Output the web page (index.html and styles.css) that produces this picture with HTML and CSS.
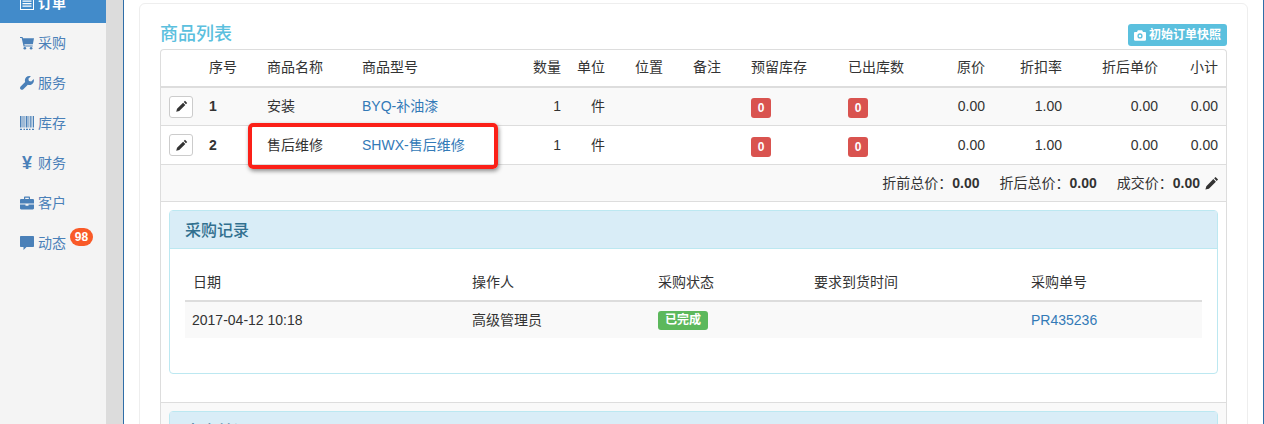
FILE: index.html
```html
<!DOCTYPE html>
<html lang="zh-CN">
<head>
  <meta charset="UTF-8">
  <title>订单详情</title>
  <link rel="stylesheet" href="styles.css">
</head>
<body>
  <aside class="sidebar">
    <a class="nav-item active" href="#">
      <svg class="nav-icon" viewBox="0 0 14 14"><path fill="currentColor" fill-rule="evenodd" d="M0 0h14v14H0zM1 3v10h12V3zM2.500 4.500h9v1.300h-9zM2.500 7h9v1.300h-9zM2.500 9.500h9v1.300h-9z"/></svg>
      <span>订单</span>
    </a>
    <a class="nav-item" href="#">
      <svg class="nav-icon" viewBox="0 0 16 16"><path fill="currentColor" d="M0 1h2.900l.5 1.700H16l-1.300 6.800H5l.3 1.300h9.200V12H4.100L1.900 2.200H0z"/><circle fill="currentColor" cx="5.500" cy="14" r="1.500"/><circle fill="currentColor" cx="12.700" cy="14" r="1.500"/></svg>
      <span>采购</span>
    </a>
    <a class="nav-item" href="#">
      <svg class="nav-icon" viewBox="0 0 16 16"><path fill="currentColor" d="M15.700 3.500l-2.900 2.800-2.600-.6-.6-2.500L12.400.4C10.500-.3 8.400.1 7 1.500 5.600 2.900 5.200 5 5.900 6.800L.7 12c-.9.900-.9 2.300 0 3.100s2.200.9 3.100 0L9 9.900c1.800.7 3.900.3 5.300-1.100 1.500-1.400 1.900-3.500 1.400-5.300z"/></svg>
      <span>服务</span>
    </a>
    <a class="nav-item" href="#">
      <svg class="nav-icon" viewBox="0 0 14 14"><path fill="currentColor" d="M0 0h1.500v11.500H0zM2.500 0h1v11.500h-1zM4.500 0h.8v11.500h-.8zM6 0h1.500v11.500H6zM8.500 0h.8v11.500h-.8zM10 0h.8v11.500h-.8zM11.500 0h.8v11.500h-.8zM13 0h1v11.500h-1zM0 12.800h2V14H0zM3.500 12.800h1.500V14H3.500zM6 12.800h2V14H6zM9 12.800h1.500V14H9zM12 12.800h2V14h-2z"/></svg>
      <span>库存</span>
    </a>
    <a class="nav-item" href="#">
      <span class="yen-icon">¥</span>
      <span>财务</span>
    </a>
    <a class="nav-item" href="#">
      <svg class="nav-icon" viewBox="0 0 14 13"><path fill="currentColor" fill-rule="evenodd" d="M4 2.500V1c0-.6.400-1 1-1h4c.6 0 1 .4 1 1v1.500h2.800c.7 0 1.200.5 1.200 1.200V7H0V3.700c0-.7.500-1.200 1.200-1.200zM5.200 1.200v1.300h3.600V1.200zM0 8h5.500v1.200h3V8H14v3.800c0 .7-.5 1.200-1.200 1.200H1.200C.5 13 0 12.500 0 11.800z"/></svg>
      <span>客户</span>
    </a>
    <a class="nav-item" href="#">
      <svg class="nav-icon" viewBox="0 0 14 14"><path fill="currentColor" d="M1 0h12c.6 0 1 .4 1 1v9c0 .6-.4 1-1 1H6.500L3.500 14v-3H1c-.6 0-1-.4-1-1V1c0-.6.400-1 1-1z"/></svg>
      <span>动态</span>
      <span class="nav-badge">98</span>
    </a>
  </aside>

  <div class="gutter"></div>

  <main class="page">
    <section class="card">
      <div class="card-head">
        <h3 class="card-title">商品列表</h3>
        <a class="snapshot-btn" href="#">
          <svg class="camera" viewBox="0 0 14 12"><path fill="currentColor" fill-rule="evenodd" d="M4.500 0h5l1 2H13c.6 0 1 .4 1 1v8c0 .6-.4 1-1 1H1c-.6 0-1-.4-1-1V3c0-.6.400-1 1-1h2.500zM7 3.500a3 3 0 1 0 0 6 3 3 0 0 0 0-6zM7 5a1.500 1.500 0 1 1 0 3 1.500 1.500 0 0 1 0-3z"/></svg>
          初始订单快照
        </a>
      </div>

      <div class="goods-box">
        <table class="goods-table">
          <colgroup>
            <col class="c-edit"><col class="c-no"><col class="c-name"><col class="c-model"><col class="c-qty"><col class="c-unit">
            <col class="c-pos"><col class="c-note"><col class="c-stock"><col class="c-out"><col class="c-price"><col class="c-rate"><col class="c-net"><col class="c-sub">
          </colgroup>
          <thead>
            <tr>
              <th></th><th>序号</th><th>商品名称</th><th>商品型号</th><th class="num">数量</th><th class="num unit">单位</th>
              <th>位置</th><th>备注</th><th>预留库存</th><th>已出库数</th><th class="num">原价</th><th class="num">折扣率</th><th class="num">折后单价</th><th class="num">小计</th>
            </tr>
          </thead>
          <tbody>
            <tr class="row-a">
              <td class="edit-cell"><button class="edit-btn"><svg class="pencil" viewBox="0 0 16 16"><path fill="currentColor" d="M12.300 1l2.700 2.700-1.500 1.500-2.700-2.700zM10 3.300L12.700 6l-7.500 7.500-3.700 1 1-3.700z"/></svg></button></td>
              <td><b>1</b></td><td>安装</td><td><a href="#">BYQ-补油漆</a></td><td class="num">1</td><td class="num unit">件</td>
              <td></td><td></td><td><span class="tag">0</span></td><td><span class="tag">0</span></td>
              <td class="num">0.00</td><td class="num">1.00</td><td class="num">0.00</td><td class="num">0.00</td>
            </tr>
            <tr class="row-b">
              <td class="edit-cell"><button class="edit-btn"><svg class="pencil" viewBox="0 0 16 16"><path fill="currentColor" d="M12.300 1l2.700 2.700-1.500 1.500-2.700-2.700zM10 3.300L12.700 6l-7.500 7.500-3.700 1 1-3.700z"/></svg></button></td>
              <td><b>2</b></td><td>售后维修</td><td><a href="#">SHWX-售后维修</a></td><td class="num">1</td><td class="num unit">件</td>
              <td></td><td></td><td><span class="tag">0</span></td><td><span class="tag">0</span></td>
              <td class="num">0.00</td><td class="num">1.00</td><td class="num">0.00</td><td class="num">0.00</td>
            </tr>
          </tbody>
        </table>

        <div class="totals">
          <span>折前总价：<b>0.00</b></span>
          <span>折后总价：<b>0.00</b></span>
          <span class="final">成交价：<b>0.00</b><svg class="pencil big" viewBox="0 0 16 16"><path fill="currentColor" d="M12.300 1l2.700 2.700-1.500 1.500-2.700-2.700zM10 3.300L12.700 6l-7.500 7.500-3.700 1 1-3.700z"/></svg></span>
        </div>

        <div class="panel-wrap">
          <div class="panel">
            <div class="panel-head">采购记录</div>
            <div class="panel-body">
              <table class="record-table">
                <colgroup><col class="r-date"><col class="r-user"><col class="r-state"><col class="r-time"><col class="r-code"></colgroup>
                <thead>
                  <tr><th>日期</th><th>操作人</th><th>采购状态</th><th>要求到货时间</th><th>采购单号</th></tr>
                </thead>
                <tbody>
                  <tr><td>2017-04-12 10:18</td><td>高级管理员</td><td><span class="done">已完成</span></td><td></td><td><a href="#">PR435236</a></td></tr>
                </tbody>
              </table>
            </div>
          </div>
        </div>

        <div class="panel-wrap striped">
          <div class="panel">
            <div class="panel-head">出库单记录</div>
          </div>
        </div>

        <div class="mark"></div>
      </div>
    </section>
  </main>
</body>
</html>
```

FILE: styles.css
```css
* {
    box-sizing: border-box;
}

html, body {
    height: 424px;
    overflow: hidden;
}

body {
    margin: 0;
    display: flex;
    font-family: "Liberation Sans", "Noto Sans CJK SC", sans-serif;
    font-size: 14px;
    line-height: 20px;
    color: #333;
    background: #fff;
}

a {
    color: #337ab7;
    text-decoration: none;
}

/* sidebar is scrolled up a bit in the shot */
.sidebar {
    flex: 0 0 106px;
    height: 441px;
    margin-top: -17px;
    background: #f4f4f4;
}

.nav-item {
    position: relative;
    display: flex;
    align-items: center;
    height: 40px;
    padding-left: 20px;
    color: #4a80b8;
}

.nav-item.active {
    background: #428bca;
    color: #fff;
    font-weight: bold;
}

.nav-icon {
    width: 14px;
    height: 14px;
    margin-right: 4px;
}

.yen-icon {
    width: 14px;
    margin-right: 4px;
    padding-left: 2px;
    font-size: 18px;
    font-weight: bold;
    font-family: "Liberation Sans", sans-serif;
}

.nav-badge {
    position: absolute;
    left: 70px;
    top: 5px;
    width: 23px;
    height: 18px;
    border-radius: 9px;
    background: #f95a28;
    color: #fff;
    font-size: 12px;
    font-weight: bold;
    line-height: 18px;
    text-align: center;
}

.gutter {
    flex: 0 0 17px;
    background: #dcdcdc;
}

.page {
    flex: 1;
    min-width: 0;
    padding: 3px 15px 0;
    border-left: 1px solid #2f6ea8;
    border-right: 1px solid #2f6ea8;
}

.card {
    height: 500px;
    padding: 20px 20px 0;
    border: 1px solid #eee;
    border-radius: 6px;
}

.card-head {
    display: flex;
    justify-content: space-between;
    height: 25px;
}

.card-title {
    margin: 0;
    color: #5bc0de;
    font-size: 18px;
    font-weight: 500;
    line-height: 20px;
}

.snapshot-btn {
    display: flex;
    align-items: center;
    width: 99px;
    height: 22px;
    padding-left: 6px;
    border-radius: 3px;
    background: #5bc0de;
    color: #fff;
    font-size: 12px;
    font-weight: bold;
}

.camera {
    width: 12px;
    height: 11px;
    margin-right: 3px;
}

.goods-box {
    position: relative;
    border: 1px solid #ddd;
    border-radius: 4px 4px 0 0;
    border-bottom: 0;
}

.goods-table, .record-table {
    width: 100%;
    border-collapse: separate;
    border-spacing: 0;
    table-layout: fixed;
}

.c-edit { width: 40px; }
.c-no { width: 58px; }
.c-name { width: 95px; }
.c-model { width: 171px; }
.c-qty { width: 44px; }
.c-unit { width: 58px; }
.c-pos { width: 58px; }
.c-note { width: 58px; }
.c-stock { width: 97px; }
.c-out { width: 97px; }
.c-price { width: 56px; }
.c-rate { width: 77px; }
.c-net { width: 96px; }
.c-sub { width: 60px; }

.goods-table th, .goods-table td {
    padding: 0 8px;
    text-align: left;
    font-weight: normal;
    white-space: nowrap;
}

.goods-table th {
    height: 38px;
    padding-bottom: 2px;
    border-bottom: 2px solid #ddd;
}

.goods-table td {
    border-bottom: 1px solid #ddd;
}

.row-a td {
    height: 38px;
    padding-bottom: 1px;
    background: #f9f9f9;
}

.row-b td {
    height: 39px;
}

.goods-table .num {
    text-align: right;
}

.goods-table .unit {
    padding-right: 22px;
}

.goods-table .edit-cell {
    padding: 0 0 0 8px;
}

.edit-btn {
    display: flex;
    align-items: center;
    justify-content: center;
    width: 24px;
    height: 22px;
    padding: 0;
    border: 1px solid #ccc;
    border-radius: 3px;
    background: #fff;
    color: #333;
}

.pencil {
    width: 13px;
    height: 13px;
}

.pencil.big {
    width: 15px;
    height: 15px;
    margin-left: 4px;
}

.tag {
    display: inline-block;
    width: 20px;
    height: 20px;
    margin-top: 3px;
    border-radius: 3px;
    background: #d9534f;
    color: #fff;
    font-size: 12px;
    font-weight: bold;
    line-height: 20px;
    text-align: center;
    vertical-align: middle;
}

.totals {
    display: flex;
    justify-content: flex-end;
    align-items: center;
    gap: 20px;
    height: 37px;
    padding-right: 7px;
    border-bottom: 1px solid #ddd;
    background: #f9f9f9;
}

.final {
    display: flex;
    align-items: center;
}

.panel-wrap {
    padding: 8px 8px 28px;
    border-bottom: 1px solid #ddd;
}

.panel-wrap.striped {
    background: #f9f9f9;
    border-bottom: 0;
}

.panel {
    border: 1px solid #bce8f1;
    border-radius: 4px;
}

.panel-head {
    height: 38px;
    padding: 1px 0 0 15px;
    border-bottom: 1px solid #bce8f1;
    background: #d9edf7;
    color: #31708f;
    font-size: 16px;
    font-weight: 500;
    line-height: 38px;
}

.panel-body {
    padding: 15px;
}

.record-table {
    margin-bottom: 20px;
}

.r-date { width: 279px; }
.r-user { width: 186px; }
.r-state { width: 156px; }
.r-time { width: 217px; }
.r-code { width: 179px; }

.record-table th, .record-table td {
    padding: 0 8px;
    text-align: left;
    font-weight: normal;
}

.record-table th {
    height: 38px;
    border-bottom: 2px solid #ddd;
}

.record-table td {
    height: 36px;
    background: #f9f9f9;
}

.record-table td:first-child {
    padding-left: 7px;
}

.done {
    display: inline-block;
    width: 50px;
    height: 19px;
    border-radius: 3px;
    background: #5cb85c;
    color: #fff;
    font-size: 12px;
    font-weight: bold;
    line-height: 19px;
    text-align: center;
    vertical-align: middle;
}

/* red annotation box drawn over the second row */
.mark {
    position: absolute;
    left: 87px;
    top: 73px;
    width: 250px;
    height: 46px;
    border: 4px solid #fb2018;
    border-radius: 5px;
    box-shadow: 1px 2px 4px rgba(0, 0, 0, 0.45);
}
```
